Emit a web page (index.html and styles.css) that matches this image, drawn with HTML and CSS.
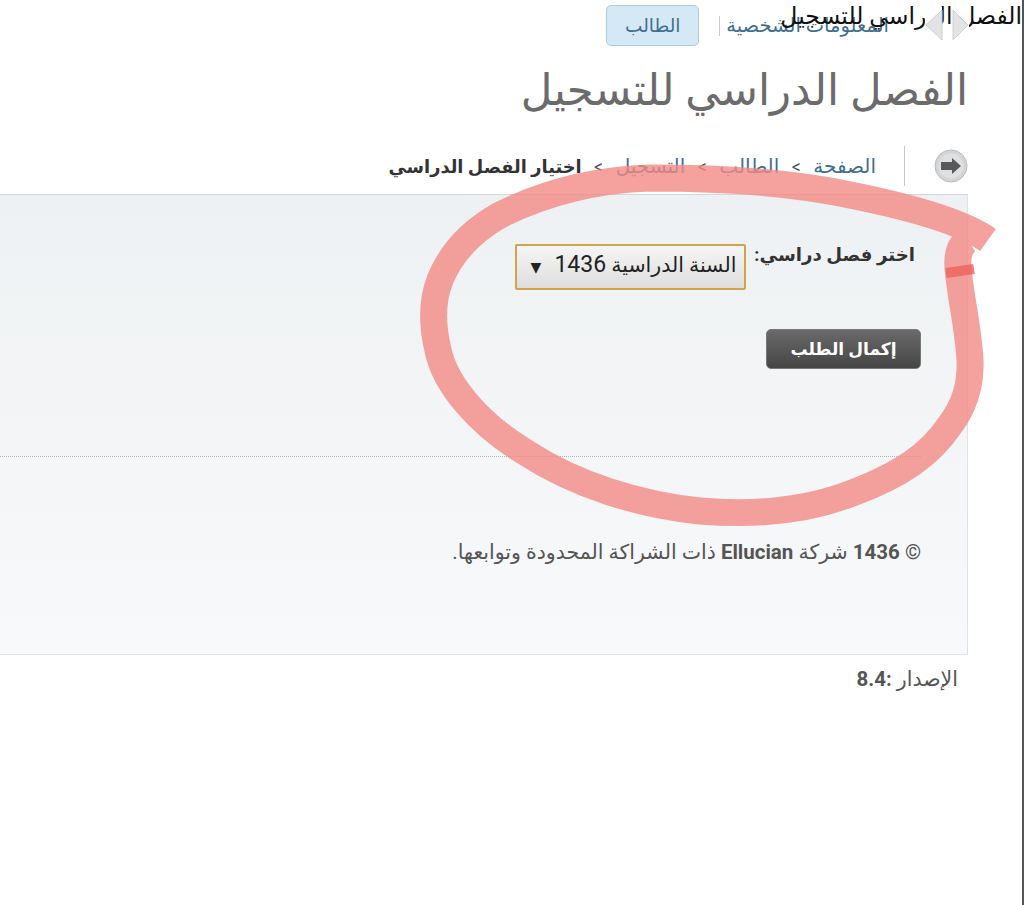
FILE: index.html
```html
<!DOCTYPE html>
<html lang="ar" dir="rtl">
<head>
    <meta charset="UTF-8">
    <meta name="viewport" content="width=device-width, initial-scale=1.0">
    <title>الفصل الدراسي للتسجيل</title>
    <link rel="stylesheet" href="styles.css">
</head>
<body>
    <div class="page">
        <div class="skip-title">الفصل الدراسي للتسجيل</div>
        <div class="nav-arrows">
            <svg width="44" height="36" viewBox="0 0 44 36">
                <rect x="0" y="0" width="17" height="36" fill="white"/>
                <rect x="28" y="0" width="16" height="36" fill="white"/>
                <path d="M1 18 L17 3 V33 Z" fill="#e2e3e3" stroke="#cfd0d0"/>
                <path d="M43 18 L28 3 V33 Z" fill="#e2e3e3" stroke="#cfd0d0"/>
            </svg>
        </div>

        <nav class="tabs">
            <a class="tab active">الطالب</a>
            <span class="tab-sep"></span>
            <a class="tab">المعلومات الشخصية</a>
        </nav>

        <h1>الفصل الدراسي للتسجيل</h1>

        <div class="crumbs">
            <svg class="back" width="34" height="34" viewBox="0 0 34 34">
                <circle cx="17" cy="17" r="16" fill="#d4d5d6" stroke="#b9babb"/>
                <circle cx="17" cy="17" r="12.5" fill="#dfe0e1"/>
                <path d="M7 17 L16 9 V13 H27 V21 H16 V25 Z" fill="#58595b" transform="rotate(180 17 17)"/>
            </svg>
            <span class="crumb-sep"></span>
            <a>الصفحة</a><i>&gt;</i>
            <a>الطالب</a><i>&gt;</i>
            <a>التسجيل</a><i>&gt;</i>
            <b>اختيار الفصل الدراسي</b>
        </div>

        <div class="panel">
            <form class="term-form">
                <label>اختر فصل دراسي:</label>
                <div class="select">السنة الدراسية <span class="year">1436</span> <span class="caret">▼</span></div>
            </form>
            <button class="submit" type="button">إكمال الطلب</button>
            <hr class="dots">
            <p class="copyright">© <b>1436</b> شركة <b>Ellucian</b> ذات الشراكة المحدودة وتوابعها.</p>
        </div>

        <div class="release">الإصدار <b>:8.4</b></div>

        <svg class="scribble" width="1024" height="905" viewBox="0 0 1024 905">
            <path d="M988 240 C960 220 900 205 850 195 C790 182 720 178 650 178 C590 180 540 195 500 215 C470 232 450 255 440 280 C432 300 432 325 438 350 C445 385 480 425 525 452 C575 485 640 505 700 511 C760 516 810 510 855 492 C900 475 930 455 950 425 C965 405 971 385 970 360 C968 325 960 295 958 268 C957 255 960 245 968 240"/>
            <path class="mark" d="M946 273 L974 269"/>
        </svg>
    </div>
</body>
</html>
```
FILE: styles.css
```css
* {
    margin: 0;
    padding: 0;
    box-sizing: border-box;
}

html, body {
    height: 100%;
    overflow: hidden;
    background: white;
}

body {
    font-family: Roboto, "DejaVu Sans", sans-serif;
    color: #444;
}

.page {
    position: relative;
    width: 1024px;
    height: 905px;
    border-right: 2px solid #555;
    overflow: hidden;
}

.skip-title {
    position: absolute;
    top: 1px;
    right: 0;
    font-size: 23.5px;
    line-height: 30px;
    color: #111;
    white-space: nowrap;
}

.nav-arrows {
    position: absolute;
    top: 7px;
    left: 925px;
    line-height: 0;
}

.tabs {
    display: flex;
    align-items: center;
    height: 46px;
    padding-top: 5px;
    padding-right: 133px;
    justify-content: flex-end;
    flex-direction: row-reverse;
}

.tab {
    font-size: 19.5px;
    color: #3f6f8f;
    line-height: 40px;
}

.tab.active {
    width: 93px;
    height: 41px;
    font-size: 18.5px;
    text-align: center;
    background: #d5e8f5;
    border: 1px solid #a9cfe6;
    border-radius: 5px;
}

.tab-sep {
    width: 1px;
    height: 20px;
    background: #ccc;
    margin: 0 6px 0 20px;
}

h1 {
    font-size: 43.5px;
    font-weight: normal;
    color: #6b6b6b;
    line-height: 46px;
    padding-right: 54px;
    margin-top: 22px;
    white-space: nowrap;
}

.crumbs {
    display: flex;
    align-items: center;
    height: 42px;
    margin-top: 31px;
    padding-right: 54px;
    font-size: 17.8px;
    color: #333;
    white-space: nowrap;
}

.crumbs a {
    font-size: 20px;
    color: #3f6f8f;
}

.crumbs i {
    font-style: normal;
    color: #555;
    margin: 0 12.5px;
}

.back {
    flex: none;
}

.crumb-sep {
    width: 1px;
    height: 40px;
    background: #c5c7c9;
    margin: 0 29px 0 28px;
}

.panel {
    width: 1100px;
    height: 461px;
    margin-top: 7px;
    margin-right: 54px;
    padding: 46px 46px 0 0;
    background: linear-gradient(#eef1f3, #f8f9fa);
    border: 1px solid #e0e3e5;
    border-top-color: #d3d7da;
}

.term-form {
    display: flex;
    align-items: flex-start;
    gap: 8px;
    padding-right: 6px;
    font-size: 18.2px;
    color: #333;
}

.term-form label {
    font-weight: bold;
    line-height: 28px;
}

.select {
    width: 231px;
    height: 46px;
    padding: 0 8px;
    margin-top: 3px;
    line-height: 38px;
    font-size: 20.5px;
    color: #222;
    white-space: nowrap;
    background: linear-gradient(#f5f5f5, #dedede);
    border: 2px solid #d2a24c;
    border-radius: 2px;
}

.year {
    font-size: 23px;
}

.caret {
    font-size: 14px;
    margin-right: 8px;
}

.submit {
    display: block;
    width: 155px;
    height: 40px;
    margin-top: 39px;
    font-family: inherit;
    font-size: 17px;
    font-weight: bold;
    color: white;
    background: linear-gradient(#6a6a6a, #454545);
    border: 1px solid #777;
    border-radius: 5px;
}

.dots {
    width: 1100px;
    margin-top: 87px;
    border: none;
    border-top: 1px dotted #b5b5b5;
}

.copyright {
    margin-top: 83px;
    font-size: 20.5px;
    line-height: 24px;
    color: #555;
    white-space: nowrap;
}

.release {
    margin-top: 11px;
    padding-right: 64px;
    font-size: 20.5px;
    line-height: 26px;
    color: #555;
}

.scribble {
    position: absolute;
    top: 0;
    left: 0;
    pointer-events: none;
}

.scribble path {
    fill: none;
    stroke: #f28a84;
    stroke-width: 27;
    opacity: 0.8;
}

.scribble .mark {
    stroke: #f0605a;
    stroke-width: 10;
}
```
